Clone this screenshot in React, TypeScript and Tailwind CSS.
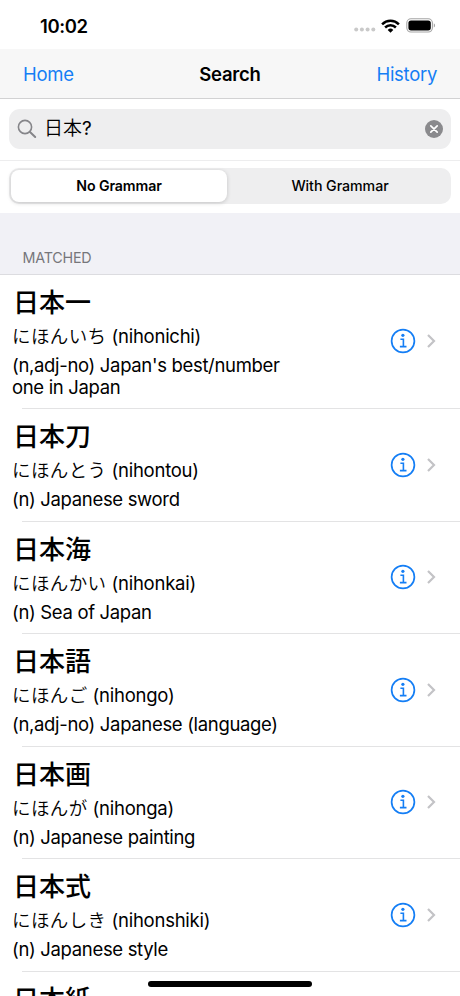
import React from 'react';

interface Entry {
  word: string;
  kana: string;
  romaji: string;
  meaning: string[];
}

const ENTRIES: Entry[] = [
  { word: '日本一', kana: 'にほんいち', romaji: '(nihonichi)', meaning: ["(n,adj-no) Japan's best/number", 'one in Japan'] },
  { word: '日本刀', kana: 'にほんとう', romaji: '(nihontou)', meaning: ['(n) Japanese sword'] },
  { word: '日本海', kana: 'にほんかい', romaji: '(nihonkai)', meaning: ['(n) Sea of Japan'] },
  { word: '日本語', kana: 'にほんご', romaji: '(nihongo)', meaning: ['(n,adj-no) Japanese (language)'] },
  { word: '日本画', kana: 'にほんが', romaji: '(nihonga)', meaning: ['(n) Japanese painting'] },
  { word: '日本式', kana: 'にほんしき', romaji: '(nihonshiki)', meaning: ['(n) Japanese style'] },
  { word: '日本紙', kana: 'にほんし', romaji: '(nihonshi)', meaning: ['(n) Japanese paper'] },
];

const StatusBar: React.FC = () => (
  <div className="flex h-[49px] shrink-0 items-center pt-[2px] pl-10 pr-[24px]">
    <span className="text-[18.5px] font-semibold leading-6 tracking-[-0.4px]">10:02</span>
    <svg className="ml-auto mt-[8px]" width="22" height="5" viewBox="0 0 22 5" fill="#c9c9c9">
      <circle cx="2.2" cy="2.5" r="2" />
      <circle cx="7.9" cy="2.5" r="2" />
      <circle cx="13.6" cy="2.5" r="2" />
      <circle cx="19.3" cy="2.5" r="2" />
    </svg>
    <svg className="ml-[5px]" width="19" height="14" viewBox="0 0 19 14" fill="none" stroke="#000" strokeWidth="2.5">
      <path d="M1.1 5.3a12 12 0 0 1 16.8 0" />
      <path d="M4.1 8.5a7.7 7.7 0 0 1 10.8 0" />
      <path d="M9.5 13.7 6.7 10.9a4 4 0 0 1 5.6 0z" fill="#000" stroke="none" />
    </svg>
    <svg className="ml-[6px]" width="30" height="15" viewBox="0 0 30 15">
      <rect x="0.8" y="0.8" width="25.6" height="13.2" rx="4.2" fill="none" stroke="#a5a5a5" strokeWidth="1.1" />
      <rect x="2.4" y="2.4" width="22.4" height="10" rx="2.6" fill="#000" />
      <path d="M27.8 5.2v4.4c1.8-.7 1.8-3.7 0-4.4z" fill="#a5a5a5" />
    </svg>
  </div>
);

const NavBar: React.FC = () => (
  <nav className="grid h-[50px] shrink-0 grid-cols-3 items-center border-b border-[#d2d2d3] bg-[#f7f7f7] px-[23px] pt-px text-[18.5px] leading-6 tracking-[-0.3px]">
    <button className="text-left text-[#147ef5]">Home</button>
    <h1 className="text-center font-semibold tracking-[-0.25px]">Search</h1>
    <button className="text-right text-[#147ef5]">History</button>
  </nav>
);

const SearchField: React.FC = () => (
  <div className="h-[62px] shrink-0 border-b border-[#ededee] px-[9px] pt-[10px]">
    <div className="flex h-10 items-center rounded-[11px] bg-[#eeeeef] pl-2 pr-[7px]">
      <svg width="20" height="20" viewBox="0 0 20 20" fill="none" stroke="#858589" strokeWidth="1.6" strokeLinecap="round">
        <circle cx="8" cy="8" r="6.6" />
        <path d="m13 13 5.2 5" strokeWidth="2" />
      </svg>
      <span className="ml-[7px] flex text-[19px] leading-6">
        <span className="font-[350]">日本</span>
        <span>?</span>
      </span>
      <svg className="ml-auto" width="20" height="20" viewBox="0 0 20 20">
        <circle cx="10" cy="10" r="9" fill="#8a8a8d" />
        <path d="m6.8 6.8 6.4 6.4m0-6.4-6.4 6.4" stroke="#fff" strokeWidth="1.7" strokeLinecap="round" />
      </svg>
    </div>
  </div>
);

const GrammarToggle: React.FC = () => (
  <div className="h-[52px] shrink-0 px-[9px] pt-[7px]">
    <div className="grid h-9 grid-cols-[216px_1fr] rounded-[10px] bg-[#eeeeef] p-[2px] text-[14.2px] leading-5">
      <button className="rounded-[8px] bg-white font-semibold tracking-[-0.1px] shadow-[0_1px_4px_rgba(0,0,0,0.18)]">No Grammar</button>
      <button className="pl-1 font-medium tracking-[-0.05px]">With Grammar</button>
    </div>
  </div>
);

const InfoIcon: React.FC = () => (
  <svg width="26" height="26" viewBox="0 0 26 26" fill="none" stroke="#147ef5" strokeWidth="1.7">
    <circle cx="13" cy="13" r="11.4" />
    <circle cx="12.9" cy="7.3" r="1.6" fill="#147ef5" stroke="none" />
    <path d="M10.4 11.3h3v7.2M9.9 18.6h6.6" strokeWidth="1.6" />
  </svg>
);

const EntryRow: React.FC<{ entry: Entry }> = ({ entry }) => (
  <li className="flex shrink-0 flex-col">
    <div className="flex items-center pl-3 pr-[23px]">
      <div className="pb-[10.5px] pt-[10px]">
        <h2 className="pl-px text-[26px] font-medium leading-9">{entry.word}</h2>
        <p className="flex gap-[5px] whitespace-nowrap text-[18.5px] leading-[30px] tracking-[-0.25px]">
          <span className="font-[350] tracking-[0.4px]">{entry.kana}</span>
          <span>{entry.romaji}</span>
        </p>
        <div className="mt-[3px] whitespace-nowrap text-[18.5px] leading-[22px] tracking-[-0.33px]">
          {entry.meaning.map((line) => (
            <p key={line}>{line}</p>
          ))}
        </div>
      </div>
      <div className="ml-auto flex items-center gap-[10px]">
        <InfoIcon />
        <svg width="11" height="16" viewBox="0 0 11 16" fill="none" stroke="#c3c3c6" strokeWidth="2.2">
          <path d="m2 2 6 6-6 6" />
        </svg>
      </div>
    </div>
    <div className="ml-[22px] h-px bg-[#e3e3e4]" />
  </li>
);

const App: React.FC = () => (
  <main className="relative flex h-[996px] w-[460px] flex-col overflow-hidden bg-white font-['Inter','Noto_Sans_CJK_JP',sans-serif] text-black">
    <StatusBar />
    <NavBar />
    <SearchField />
    <GrammarToggle />
    <div className="flex h-[61.5px] shrink-0 items-end border-b border-[#dcdce0] bg-[#f1f1f6] pb-[6px] pl-[22.5px] text-[14.3px] leading-5 tracking-[-0.2px] text-[#76767b]">
      MATCHED
    </div>
    <ul className="flex flex-col">
      {ENTRIES.map((entry) => (
        <EntryRow key={entry.word} entry={entry} />
      ))}
    </ul>
    <div className="absolute bottom-[9px] left-[148px] h-[6px] w-[164px] rounded-full bg-black" />
  </main>
);

export default App;
